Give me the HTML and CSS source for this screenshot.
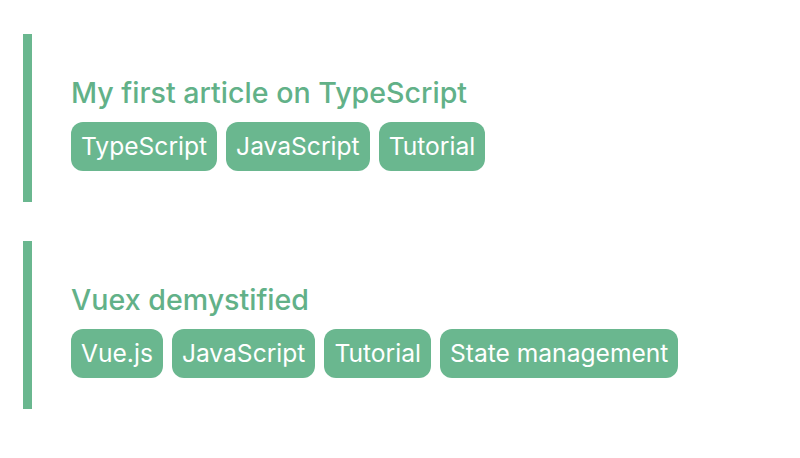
FILE: index.html
```html
<!DOCTYPE html>
<html>
<head>
<meta charset="utf-8">
<link rel="stylesheet" href="styles.css">
</head>
<body>
<main class="list">
  <article class="card">
    <h2 class="title">My first article on TypeScript</h2>
    <ul class="tags">
      <li class="tag">TypeScript</li>
      <li class="tag">JavaScript</li>
      <li class="tag">Tutorial</li>
    </ul>
  </article>
  <article class="card">
    <h2 class="title">Vuex demystified</h2>
    <ul class="tags">
      <li class="tag">Vue.js</li>
      <li class="tag">JavaScript</li>
      <li class="tag">Tutorial</li>
      <li class="tag">State management</li>
    </ul>
  </article>
</main>
</body>
</html>
```
FILE: styles.css
```css
html, body {
  margin: 0;
  padding: 0;
  background: #ffffff;
}
body {
  font-family: Inter, "Noto Sans", sans-serif;
}
.list {
  display: flex;
  flex-direction: column;
  gap: 39px;
  padding: 34px 0 0 23px;
}
.card {
  border-left: 9px solid #6ab78f;
  padding: 42px 0 0 39px;
  height: 168px;
  box-sizing: border-box;
}
.title {
  margin: 0;
  font-size: 28.6px;
  font-weight: 500;
  line-height: 34px;
  color: #62b188;
}
.tags {
  display: flex;
  gap: 9px;
  list-style: none;
  margin: 12px 0 0;
  padding: 0;
}
.tag {
  background: #6ab78f;
  color: #ffffff;
  font-size: 24.6px;
  line-height: 49px;
  height: 49px;
  padding: 0 10px;
  border-radius: 12px;
}
```
